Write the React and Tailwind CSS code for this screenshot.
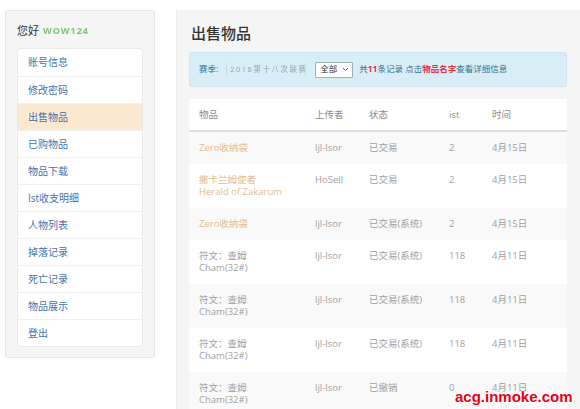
const menu = ['账号信息', '修改密码', '出售物品', '已购物品', '物品下载', 'Ist收支明细', '人物列表', '掉落记录', '死亡记录', '物品展示', '登出'];

const rows = [
  { name: ['Zero收纳袋'], link: true, user: 'ljl-lsor', status: '已交易', ist: '2', time: '4月15日' },
  { name: ['撒卡兰姆使者', 'Herald of Zakarum'], link: true, user: 'HoSell', status: '已交易', ist: '2', time: '4月15日' },
  { name: ['Zero收纳袋'], link: true, user: 'ljl-lsor', status: '已交易(系统)', ist: '2', time: '4月15日' },
  { name: ['符文：查姆', 'Cham(32#)'], user: 'ljl-lsor', status: '已交易(系统)', ist: '118', time: '4月11日' },
  { name: ['符文：查姆', 'Cham(32#)'], user: 'ljl-lsor', status: '已交易(系统)', ist: '118', time: '4月11日' },
  { name: ['符文：查姆', 'Cham(32#)'], user: 'ljl-lsor', status: '已交易(系统)', ist: '118', time: '4月11日' },
  { name: ['符文：查姆', 'Cham(32#)'], user: 'ljl-lsor', status: '已撤销', ist: '0', time: '4月11日' },
];

const font = { fontFamily: '"Open Sans", "Noto Sans CJK SC", sans-serif' };

export default function App() {
  return (
    <div className="relative flex h-[409px] w-[580px] items-start overflow-hidden bg-white" style={font}>
      {/* sidebar */}
      <aside className="ml-[5px] mt-[10px] h-[348px] w-[150px] shrink-0 rounded-[3px] border border-[#e6e6e6] bg-[#f5f5f5] px-[11px]">
        <div className="flex h-[37px] items-center pt-[3px] text-[11px] text-[#333]">
          <span>您好</span>
          <span className="ml-[4px] text-[9px] font-bold tracking-[1px] text-[#7cc576] blur-[0.6px]">WOW124</span>
        </div>
        <ul className="overflow-hidden rounded-[3px] border border-[#eaeaea] bg-white">
          {menu.map((m, i) => (
            <li
              key={m}
              className={`flex h-[27px] items-center px-[10px] text-[10px] text-[#3f73ab] ${i > 0 ? 'border-t border-[#f0f0f0]' : ''} ${i === 2 ? 'bg-[#fbe8d1]' : ''}`}
            >
              {m}
            </li>
          ))}
        </ul>
      </aside>

      {/* main */}
      <main className="ml-[21px] mt-[10px] h-[420px] w-[410px] shrink-0 border-l border-[#ececec] bg-[#f5f5f5] pl-[12px] pt-[11px]">
        <h1 className="h-[24px] pl-[2px] text-[15px] font-medium leading-[24px] text-[#333]">出售物品</h1>

        <div className="mt-[7px] flex h-[35px] w-[378px] items-center whitespace-nowrap rounded-[3px] border border-[#c9e6f2] bg-[#d9edf7] px-[9px] text-[8.5px] text-[#31708f]">
          <span className="shrink-0">赛季:</span>
          <span className="ml-[8px] flex h-[14px] w-[80px] shrink-0 items-center overflow-hidden border-x border-[#cfdde6] px-[3px] text-[7.5px] tracking-[1.5px] text-[#8aa6b8] blur-[0.6px]">
            2018第十八次联赛
          </span>
          <span className="ml-[9px] flex h-[16px] w-[38px] shrink-0 items-center justify-between rounded-[1px] border border-[#9fb0bd] bg-white pl-[4px] pr-[3px] text-[8.5px] text-[#333]">
            全部
            <svg width="7" height="5" viewBox="0 0 7 5" fill="none" stroke="#666" strokeWidth="1">
              <path d="M1 1l2.5 2.5L6 1" />
            </svg>
          </span>
          <span className="ml-[6px] shrink-0">
            共<b className="text-[#e0333a]">11</b>条记录 点击<span className="font-semibold text-[#e0333a]">物品名字</span>查看详细信息
          </span>
        </div>

        <div className="mt-[12px] w-[378px] bg-white">
          <table className="w-full table-fixed border-collapse text-left text-[9.5px] leading-[12px] text-[#a0a0a0]">
            <colgroup>
              <col className="w-[116px]" />
              <col className="w-[54px]" />
              <col className="w-[80px]" />
              <col className="w-[43px]" />
              <col />
            </colgroup>
            <thead>
              <tr className="h-[32px] border-b-2 border-[#dedede] text-[#8c8c8c]">
                <th className="pl-[10px] font-normal">物品</th>
                <th className="pl-[10px] font-normal">上传者</th>
                <th className="pl-[10px] font-normal">状态</th>
                <th className="pl-[10px] font-normal">ist</th>
                <th className="pl-[10px] font-normal">时间</th>
              </tr>
            </thead>
            <tbody>
              {rows.map((r, i) => (
                <tr key={i} className={i % 2 === 0 ? 'bg-[#f9f9f9]' : 'bg-white'}>
                  <td className={`px-[10px] py-[10px] align-top ${r.link ? 'text-[#e3bc92]' : ''}`}>
                    {r.name.map((n) => (
                      <div key={n} className="whitespace-nowrap">{n}</div>
                    ))}
                  </td>
                  <td className="px-[10px] py-[10px] align-top">{r.user}</td>
                  <td className="px-[10px] py-[10px] align-top">{r.status}</td>
                  <td className="px-[10px] py-[10px] align-top">{r.ist}</td>
                  <td className="px-[10px] py-[10px] align-top">{r.time}</td>
                </tr>
              ))}
            </tbody>
          </table>
        </div>
      </main>

      <div
        className="absolute left-[455px] top-[387px] text-[15px] font-bold leading-[20px] text-[#e60012]"
        style={{ fontFamily: '"Liberation Sans", sans-serif', textShadow: '1px 0 #fff, -1px 0 #fff, 0 1px #fff, 0 -1px #fff' }}
      >
        acg.inmoke.com
      </div>
    </div>
  );
}
